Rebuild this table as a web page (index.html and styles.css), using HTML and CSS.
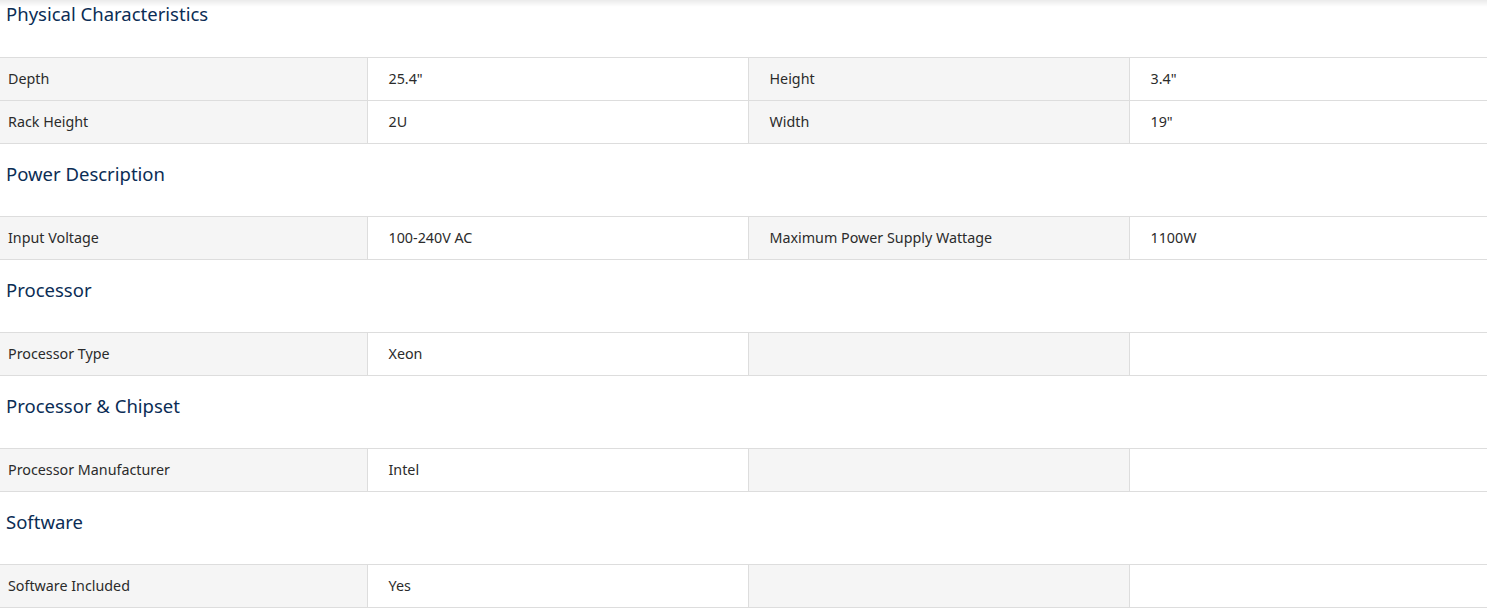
FILE: index.html
```html
<!DOCTYPE html>
<html>
<head>
<meta charset="utf-8">
<link rel="stylesheet" href="styles.css">
</head>
<body>
<div class="topshade"></div>
<main class="specs">
  <section class="group first">
    <h2 class="group-title">Physical Characteristics</h2>
    <table class="spec-table">
      <colgroup><col class="c1"><col class="c2"><col class="c3"><col class="c4"></colgroup>
      <tr><td class="label">Depth</td><td class="value">25.4"</td><td class="label">Height</td><td class="value">3.4"</td></tr>
      <tr><td class="label">Rack Height</td><td class="value">2U</td><td class="label">Width</td><td class="value">19"</td></tr>
    </table>
  </section>
  <section class="group">
    <h2 class="group-title">Power Description</h2>
    <table class="spec-table">
      <colgroup><col class="c1"><col class="c2"><col class="c3"><col class="c4"></colgroup>
      <tr><td class="label">Input Voltage</td><td class="value">100-240V AC</td><td class="label">Maximum Power Supply Wattage</td><td class="value">1100W</td></tr>
    </table>
  </section>
  <section class="group">
    <h2 class="group-title">Processor</h2>
    <table class="spec-table">
      <colgroup><col class="c1"><col class="c2"><col class="c3"><col class="c4"></colgroup>
      <tr><td class="label">Processor Type</td><td class="value">Xeon</td><td class="label"></td><td class="value"></td></tr>
    </table>
  </section>
  <section class="group">
    <h2 class="group-title">Processor &amp; Chipset</h2>
    <table class="spec-table">
      <colgroup><col class="c1"><col class="c2"><col class="c3"><col class="c4"></colgroup>
      <tr><td class="label">Processor Manufacturer</td><td class="value">Intel</td><td class="label"></td><td class="value"></td></tr>
    </table>
  </section>
  <section class="group">
    <h2 class="group-title">Software</h2>
    <table class="spec-table">
      <colgroup><col class="c1"><col class="c2"><col class="c3"><col class="c4"></colgroup>
      <tr><td class="label">Software Included</td><td class="value">Yes</td><td class="label"></td><td class="value"></td></tr>
    </table>
  </section>
</main>
</body>
</html>
```
FILE: styles.css
```css
html, body {
  margin: 0;
  padding: 0;
  background: #ffffff;
  overflow: hidden;
}
body {
  font-family: "Noto Sans", "Open Sans", sans-serif;
  color: #333333;
}
.topshade {
  position: fixed;
  top: 0;
  left: 0;
  right: 0;
  height: 7px;
  background: linear-gradient(to bottom, rgba(0,0,0,0.08), rgba(0,0,0,0));
  pointer-events: none;
}
.specs {
  display: flex;
  flex-direction: column;
}
.group-title {
  margin: 0;
  height: 72px;
  box-sizing: border-box;
  padding: 17px 6px 0;
  font-size: 18.5px;
  font-weight: 400;
  line-height: 26px;
  color: #0b2d55;
}
.group.first .group-title {
  height: 57px;
  padding-top: 1px;
}
.spec-table {
  width: 1487px;
  border-collapse: collapse;
  table-layout: fixed;
}
.c1 { width: 367px; }
.c2 { width: 381px; }
.c3 { width: 381px; }
.c4 { width: 358px; }
.spec-table td {
  height: 43px;
  box-sizing: border-box;
  border: 1px solid #dddddd;
  padding: 0 0 0 21px;
  font-size: 14.3px;
  line-height: 18px;
  color: #2b2b2b;
  vertical-align: middle;
}
.spec-table td:first-child {
  border-left: none;
  padding-left: 8px;
}
.spec-table td:last-child {
  border-right: none;
}
.spec-table td.label {
  background: #f5f5f5;
}
.spec-table td.value {
  background: #ffffff;
}
```
